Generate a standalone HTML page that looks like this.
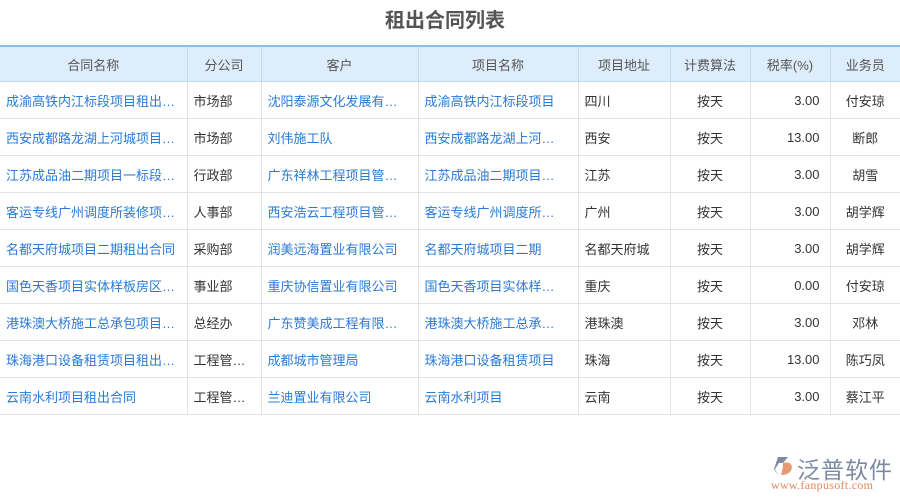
<!DOCTYPE html>
<html><head><meta charset="utf-8"><style>
body{margin:0;width:900px;height:500px;background:#fff;font-family:"Liberation Sans","Noto Sans CJK SC",sans-serif;position:relative;overflow:hidden}
h1{position:absolute;top:6px;left:0;width:890px;text-align:center;margin:0;font-size:20px;font-weight:bold;color:#555;line-height:30px}
table{position:absolute;top:45px;left:0;border-collapse:collapse;table-layout:fixed;width:900px;font-size:13px}
th{background:#deedfb;color:#555;font-weight:normal;height:34px;border:1px solid #c6d9ec;border-top:2px solid #8fbbe4;padding:0}
td{height:36px;border:1px solid #e3e3e3;padding:0 6px;white-space:nowrap;overflow:hidden;color:#333}
tr td:first-child,tr th:first-child{border-left:none}
tr td:last-child,tr th:last-child{border-right:none}
.b{color:#2a7ad6}.c{text-align:center}.r{text-align:right;padding-right:10px}
</style></head><body>
<h1>租出合同列表</h1>
<table>
<colgroup><col style="width:187px"><col style="width:74px"><col style="width:157px"><col style="width:160px"><col style="width:92px"><col style="width:80px"><col style="width:80px"><col style="width:70px"></colgroup>
<tr><th>合同名称</th><th>分公司</th><th>客户</th><th>项目名称</th><th>项目地址</th><th>计费算法</th><th>税率(%)</th><th>业务员</th></tr>
<tr><td class="b">成渝高铁内江标段项目租出…</td><td>市场部</td><td class="b">沈阳泰源文化发展有…</td><td class="b">成渝高铁内江标段项目</td><td>四川</td><td class="c">按天</td><td class="r">3.00</td><td class="c">付安琼</td></tr>
<tr><td class="b">西安成都路龙湖上河城项目…</td><td>市场部</td><td class="b">刘伟施工队</td><td class="b">西安成都路龙湖上河…</td><td>西安</td><td class="c">按天</td><td class="r">13.00</td><td class="c">断郎</td></tr>
<tr><td class="b">江苏成品油二期项目一标段…</td><td>行政部</td><td class="b">广东祥林工程项目管…</td><td class="b">江苏成品油二期项目…</td><td>江苏</td><td class="c">按天</td><td class="r">3.00</td><td class="c">胡雪</td></tr>
<tr><td class="b">客运专线广州调度所装修项…</td><td>人事部</td><td class="b">西安浩云工程项目管…</td><td class="b">客运专线广州调度所…</td><td>广州</td><td class="c">按天</td><td class="r">3.00</td><td class="c">胡学辉</td></tr>
<tr><td class="b">名都天府城项目二期租出合同</td><td>采购部</td><td class="b">润美远海置业有限公司</td><td class="b">名都天府城项目二期</td><td>名都天府城</td><td class="c">按天</td><td class="r">3.00</td><td class="c">胡学辉</td></tr>
<tr><td class="b">国色天香项目实体样板房区…</td><td>事业部</td><td class="b">重庆协信置业有限公司</td><td class="b">国色天香项目实体样…</td><td>重庆</td><td class="c">按天</td><td class="r">0.00</td><td class="c">付安琼</td></tr>
<tr><td class="b">港珠澳大桥施工总承包项目…</td><td>总经办</td><td class="b">广东赞美成工程有限…</td><td class="b">港珠澳大桥施工总承…</td><td>港珠澳</td><td class="c">按天</td><td class="r">3.00</td><td class="c">邓林</td></tr>
<tr><td class="b">珠海港口设备租赁项目租出…</td><td>工程管…</td><td class="b">成都城市管理局</td><td class="b">珠海港口设备租赁项目</td><td>珠海</td><td class="c">按天</td><td class="r">13.00</td><td class="c">陈巧凤</td></tr>
<tr><td class="b">云南水利项目租出合同</td><td>工程管…</td><td class="b">兰迪置业有限公司</td><td class="b">云南水利项目</td><td>云南</td><td class="c">按天</td><td class="r">3.00</td><td class="c">蔡江平</td></tr>
</table>
<div style="position:absolute;left:771px;top:455px;width:24px;height:24px">
<svg width="24" height="24" viewBox="0 0 24 24"><path d="M7 2 L17 2 L12 8 L8 8 L4 14 L7 20 L3 14 Z" fill="#7d8aa3"/><path d="M12 8 Q20 6 21 12 Q20 20 10 20 Q12 14 12 8Z" fill="#e59a74"/></svg></div>
<div style="position:absolute;left:797px;top:451px;font-size:23px;color:#7d8aa3;letter-spacing:1px">泛普软件</div>
<div style="position:absolute;left:771px;top:478px;font-size:12px;color:#e08a60;font-family:'Liberation Serif',serif;letter-spacing:0.3px">www.fanpusoft.com</div>
</body></html>
